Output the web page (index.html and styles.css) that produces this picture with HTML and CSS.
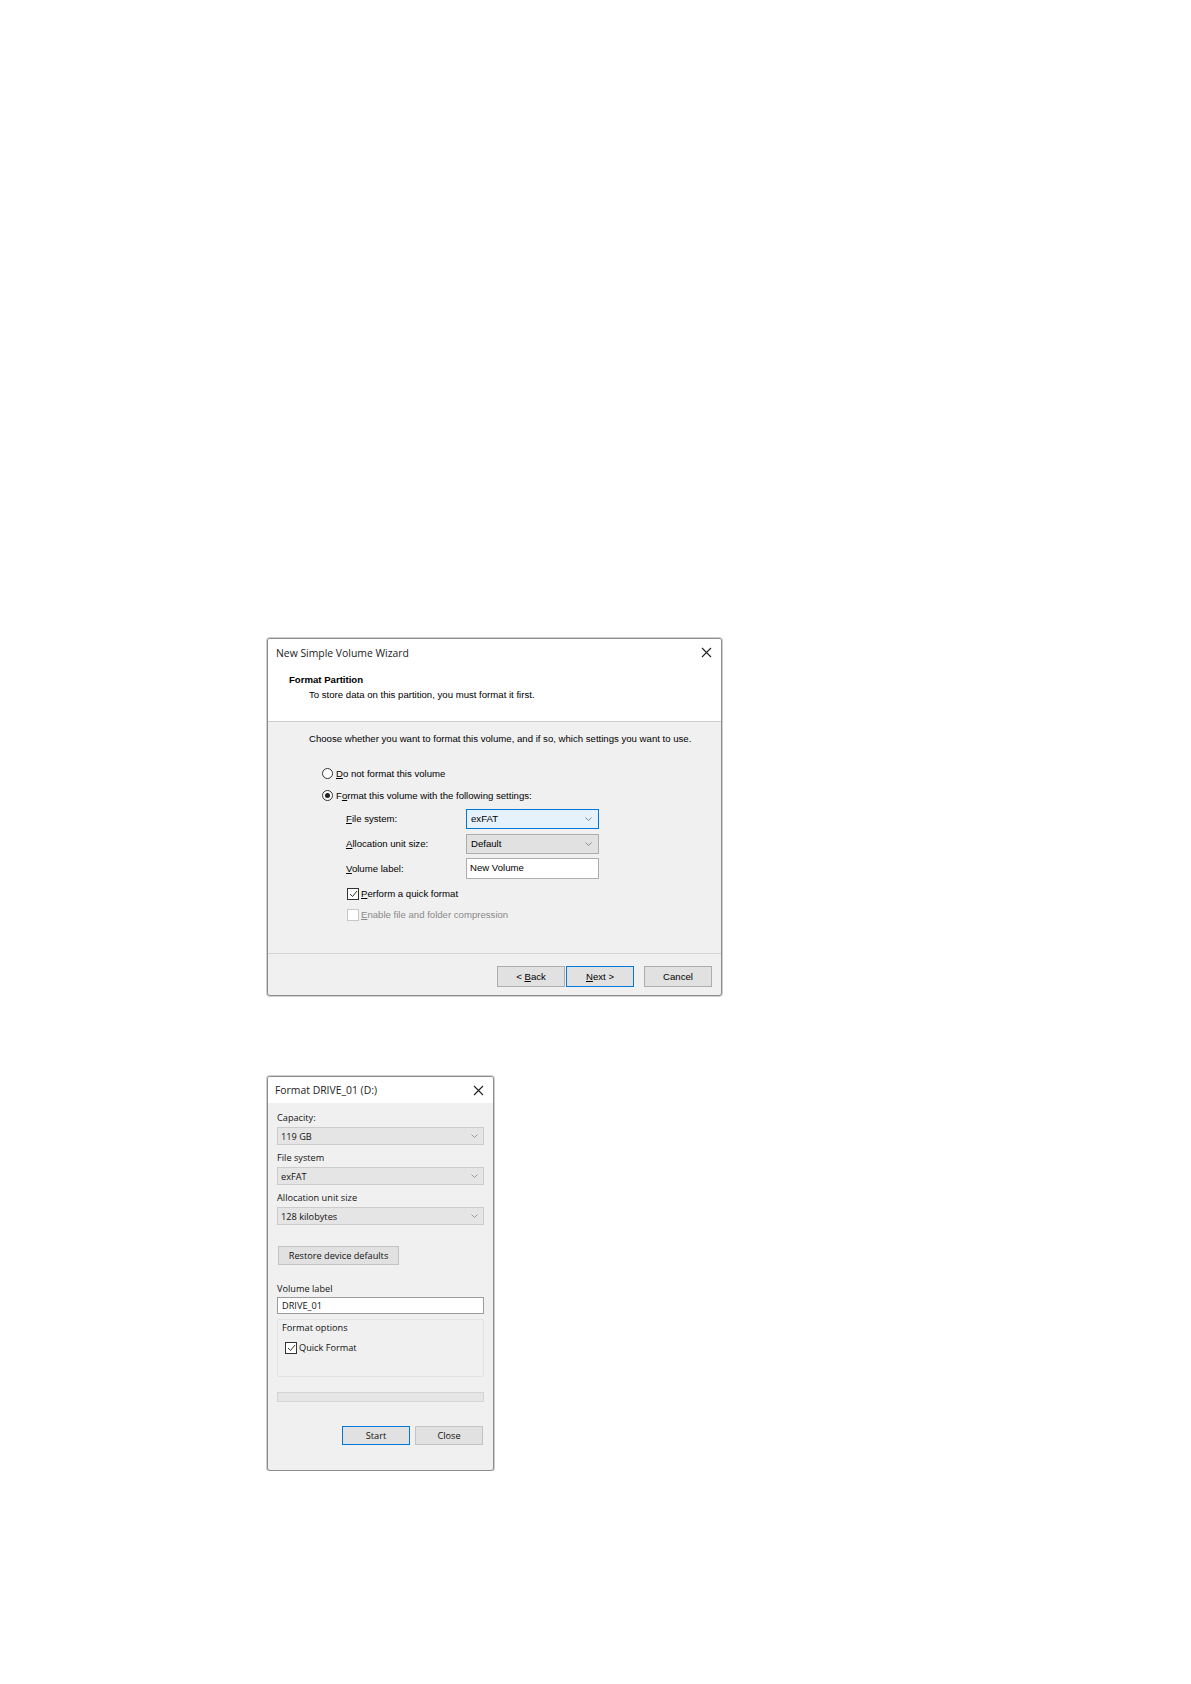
FILE: index.html
```html
<!DOCTYPE html>
<html>
<head>
<meta charset="utf-8">
<link rel="stylesheet" href="styles.css">
</head>
<body>
<div class="page">
  <div class="dlg1">
    <div class="d1-head">
      <div class="d1-title">
        <span>New Simple Volume Wizard</span>
        <svg class="x" width="11" height="11" viewBox="0 0 11 11"><path d="M1 1L10 10M10 1L1 10" stroke="#222" stroke-width="1.1" fill="none"/></svg>
      </div>
      <div class="d1-h2">Format Partition</div>
      <div class="d1-sub">To store data on this partition, you must format it first.</div>
    </div>
    <div class="d1-body">
      <div class="d1-choose">Choose whether you want to format this volume, and if so, which settings you want to use.</div>
      <div class="radio-row first"><span class="radio"></span><span><u>D</u>o not format this volume</span></div>
      <div class="radio-row"><span class="radio on"></span><span>F<u>o</u>rmat this volume with the following settings:</span></div>
      <div class="set-row"><span class="lbl"><u>F</u>ile system:</span><span class="combo focus"><span>exFAT</span><svg width="7" height="4" viewBox="0 0 7 4"><path d="M0.5 0.5L3.5 3.5L6.5 0.5" stroke="#888" fill="none"/></svg></span></div>
      <div class="set-row"><span class="lbl"><u>A</u>llocation unit size:</span><span class="combo"><span>Default</span><svg width="7" height="4" viewBox="0 0 7 4"><path d="M0.5 0.5L3.5 3.5L6.5 0.5" stroke="#888" fill="none"/></svg></span></div>
      <div class="set-row"><span class="lbl"><u>V</u>olume label:</span><span class="tbox">New Volume</span></div>
      <div class="cb-row first"><span class="cb"><svg width="9" height="8" viewBox="0 0 9 8"><path d="M1 4L3.5 6.5L8 1" stroke="#333" stroke-width="1" fill="none"/></svg></span><span><u>P</u>erform a quick format</span></div>
      <div class="cb-row dis"><span class="cb"></span><span><u>E</u>nable file and folder compression</span></div>
    </div>
    <div class="d1-foot">
      <span class="btn"><span>&lt; <u>B</u>ack</span></span>
      <span class="btn def"><span><u>N</u>ext &gt;</span></span>
      <span class="btn gap"><span>Cancel</span></span>
    </div>
  </div>

  <div class="dlg2">
    <div class="d2-title">
      <span>Format DRIVE_01 (D:)</span>
      <svg class="x" width="11" height="11" viewBox="0 0 11 11"><path d="M1 1L10 10M10 1L1 10" stroke="#222" stroke-width="1.1" fill="none"/></svg>
    </div>
    <div class="d2-body">
      <div class="d2-lbl first">Capacity:</div>
      <div class="d2-combo"><span>119 GB</span><svg width="7" height="4" viewBox="0 0 7 4"><path d="M0.5 0.5L3.5 3.5L6.5 0.5" stroke="#999" fill="none"/></svg></div>
      <div class="d2-lbl">File system</div>
      <div class="d2-combo"><span>exFAT</span><svg width="7" height="4" viewBox="0 0 7 4"><path d="M0.5 0.5L3.5 3.5L6.5 0.5" stroke="#999" fill="none"/></svg></div>
      <div class="d2-lbl">Allocation unit size</div>
      <div class="d2-combo"><span>128 kilobytes</span><svg width="7" height="4" viewBox="0 0 7 4"><path d="M0.5 0.5L3.5 3.5L6.5 0.5" stroke="#999" fill="none"/></svg></div>
      <div class="d2-restore">Restore device defaults</div>
      <div class="d2-lbl vol">Volume label</div>
      <div class="d2-tbox">DRIVE_01</div>
      <div class="d2-group">
        <div class="d2-glbl">Format options</div>
        <div class="d2-cbrow"><span class="cb"><svg width="9" height="8" viewBox="0 0 9 8"><path d="M1 4L3.5 6.5L8 1" stroke="#333" stroke-width="1" fill="none"/></svg></span><span>Quick Format</span></div>
      </div>
      <div class="d2-progress"></div>
      <div class="d2-foot">
        <span class="btn2 def">Start</span>
        <span class="btn2">Close</span>
      </div>
    </div>
  </div>
</div>
</body>
</html>
```

FILE: styles.css
```css
html, body { margin: 0; padding: 0; background: #fff; }
body { font-family: "Liberation Sans", Arial, sans-serif; color: #000; }
u { text-decoration: underline; text-underline-offset: 1px; }

.page {
  padding: 638px 0 0 267px;
  display: flex;
  flex-direction: column;
  align-items: flex-start;
  gap: 80px;
}

/* ---------- dialog 1 ---------- */
.dlg1 {
  width: 455px;
  height: 358px;
  box-sizing: border-box;
  border: 1px solid #8c8c8c;
  border-radius: 3px;
  box-shadow: 0 0 0 1px #d0d0d0;
  background: #f0f0f0;
  display: flex;
  flex-direction: column;
  overflow: hidden;
  font-size: 9.6px;
}
.d1-head {
  background: #fff;
  height: 83px;
  box-sizing: border-box;
  border-bottom: 1px solid #cfcfcf;
  flex: none;
}
.d1-title {
  height: 29px;
  box-sizing: border-box;
  display: flex;
  align-items: center;
  justify-content: space-between;
  padding: 0 9px 2px 8px;
  font-family: "Open Sans", "Noto Sans", sans-serif;
  font-size: 10.4px;
  color: #222;
}
.d1-h2 {
  margin-top: 5px;
  height: 14px;
  line-height: 14px;
  padding-left: 21px;
  font-weight: bold;
  font-size: 9.6px;
}
.d1-sub {
  height: 15px;
  line-height: 15px;
  padding-left: 41px;
}
.d1-body {
  flex: 1;
  padding: 0 0 0 41px;
}
.d1-choose { height: 33px; line-height: 33px; }
.radio-row {
  height: 22px;
  display: flex;
  align-items: center;
  padding-left: 13px;
  gap: 3px;
}
.radio-row.first { margin-top: 7px; }
.radio {
  width: 9px; height: 9px;
  border: 1px solid #333;
  border-radius: 50%;
  background: #fff;
  display: inline-flex;
  align-items: center;
  justify-content: center;
}
.radio.on::after {
  content: "";
  width: 5px; height: 5px;
  border-radius: 50%;
  background: #222;
}
.set-row {
  height: 25px;
  display: flex;
  align-items: center;
  padding-left: 37px;
}
.set-row .lbl { width: 120px; }
.combo {
  width: 133px;
  height: 20px;
  box-sizing: border-box;
  border: 1px solid #adadad;
  background: #e1e1e1;
  display: flex;
  align-items: center;
  justify-content: space-between;
  padding: 0 6px 0 4px;
}
.combo.focus { border-color: #0078d7; background: #e5f1fb; }
.tbox {
  width: 133px;
  height: 21px;
  box-sizing: border-box;
  border: 1px solid #adadad;
  background: #fff;
  display: flex;
  align-items: center;
  padding: 0 3px 3px;
}
.cb-row {
  height: 21px;
  display: flex;
  align-items: center;
  padding-left: 38px;
  gap: 2px;
}
.cb-row.first { margin-top: 2px; }
.cb {
  width: 10px; height: 10px;
  border: 1px solid #333;
  background: #fff;
  display: inline-flex;
  align-items: center;
  justify-content: center;
}
.cb-row.dis { color: #8a8a8a; }
.cb-row.dis .cb { border-color: #c8c8c8; }
.d1-foot {
  flex: none;
  height: 42px;
  box-sizing: border-box;
  border-top: 1px solid #d5d5d5;
  display: flex;
  justify-content: flex-end;
  align-items: flex-start;
  padding: 12px 9px 0 0;
  gap: 1px;
}
.btn {
  width: 68px;
  height: 21px;
  box-sizing: border-box;
  border: 1px solid #adadad;
  background: #e1e1e1;
  display: flex;
  align-items: center;
  justify-content: center;
}
.btn.def { border-color: #0078d7; }
.btn.gap { margin-left: 9px; }

/* ---------- dialog 2 ---------- */
.dlg2 {
  width: 227px;
  height: 395px;
  box-sizing: border-box;
  border: 1px solid #8c8c8c;
  border-radius: 3px;
  box-shadow: 0 0 0 1px #d0d0d0;
  background: #f0f0f0;
  display: flex;
  flex-direction: column;
  overflow: hidden;
  font-family: "Open Sans", "Noto Sans", sans-serif;
  font-size: 9.2px;
  color: #111;
}
.d2-title {
  background: #fff;
  height: 26px;
  box-sizing: border-box;
  flex: none;
  display: flex;
  align-items: center;
  justify-content: space-between;
  padding: 0 9px 0 7px;
  font-size: 10.4px;
  color: #222;
}
.d2-body { flex: 1; padding: 0 9px 0 9px; }
.d2-lbl { height: 16px; line-height: 16px; margin-top: 5px; }
.d2-lbl.first { margin-top: 7px; }
.d2-lbl.vol { margin-top: 16px; }
.d2-combo {
  height: 18px;
  box-sizing: border-box;
  margin-top: 1px;
  border: 1px solid #cccccc;
  background: #e5e5e5;
  display: flex;
  align-items: center;
  justify-content: space-between;
  padding: 0 5px 0 3px;
}
.d2-restore {
  margin-top: 21px;
  margin-left: 1px;
  width: 121px;
  height: 19px;
  box-sizing: border-box;
  border: 1px solid #c4c4c4;
  background: #e1e1e1;
  display: flex;
  align-items: center;
  justify-content: center;
}
.d2-tbox {
  height: 17px;
  box-sizing: border-box;
  margin-top: 0;
  border: 1px solid #9c9c9c;
  background: #fff;
  display: flex;
  align-items: center;
  padding: 0 4px;
}
.d2-group {
  margin-top: 5px;
  height: 58px;
  box-sizing: border-box;
  border: 1px solid #e2e2e2;
  border-radius: 2px;
  padding: 0 0 0 4px;
}
.d2-glbl { height: 16px; line-height: 16px; }
.d2-cbrow {
  height: 17px;
  display: flex;
  align-items: center;
  gap: 2px;
  padding-left: 3px;
  margin-top: 3px;
}
.d2-progress {
  margin-top: 15px;
  height: 10px;
  box-sizing: border-box;
  border: 1px solid #d4d4d4;
  background: #e6e6e6;
}
.d2-foot {
  margin-top: 24px;
  display: flex;
  justify-content: flex-end;
  gap: 5px;
  padding-right: 1px;
}
.btn2 {
  width: 68px;
  height: 19px;
  box-sizing: border-box;
  border: 1px solid #c4c4c4;
  background: #e1e1e1;
  display: flex;
  align-items: center;
  justify-content: center;
}
.btn2.def { border-color: #0078d7; }
```
